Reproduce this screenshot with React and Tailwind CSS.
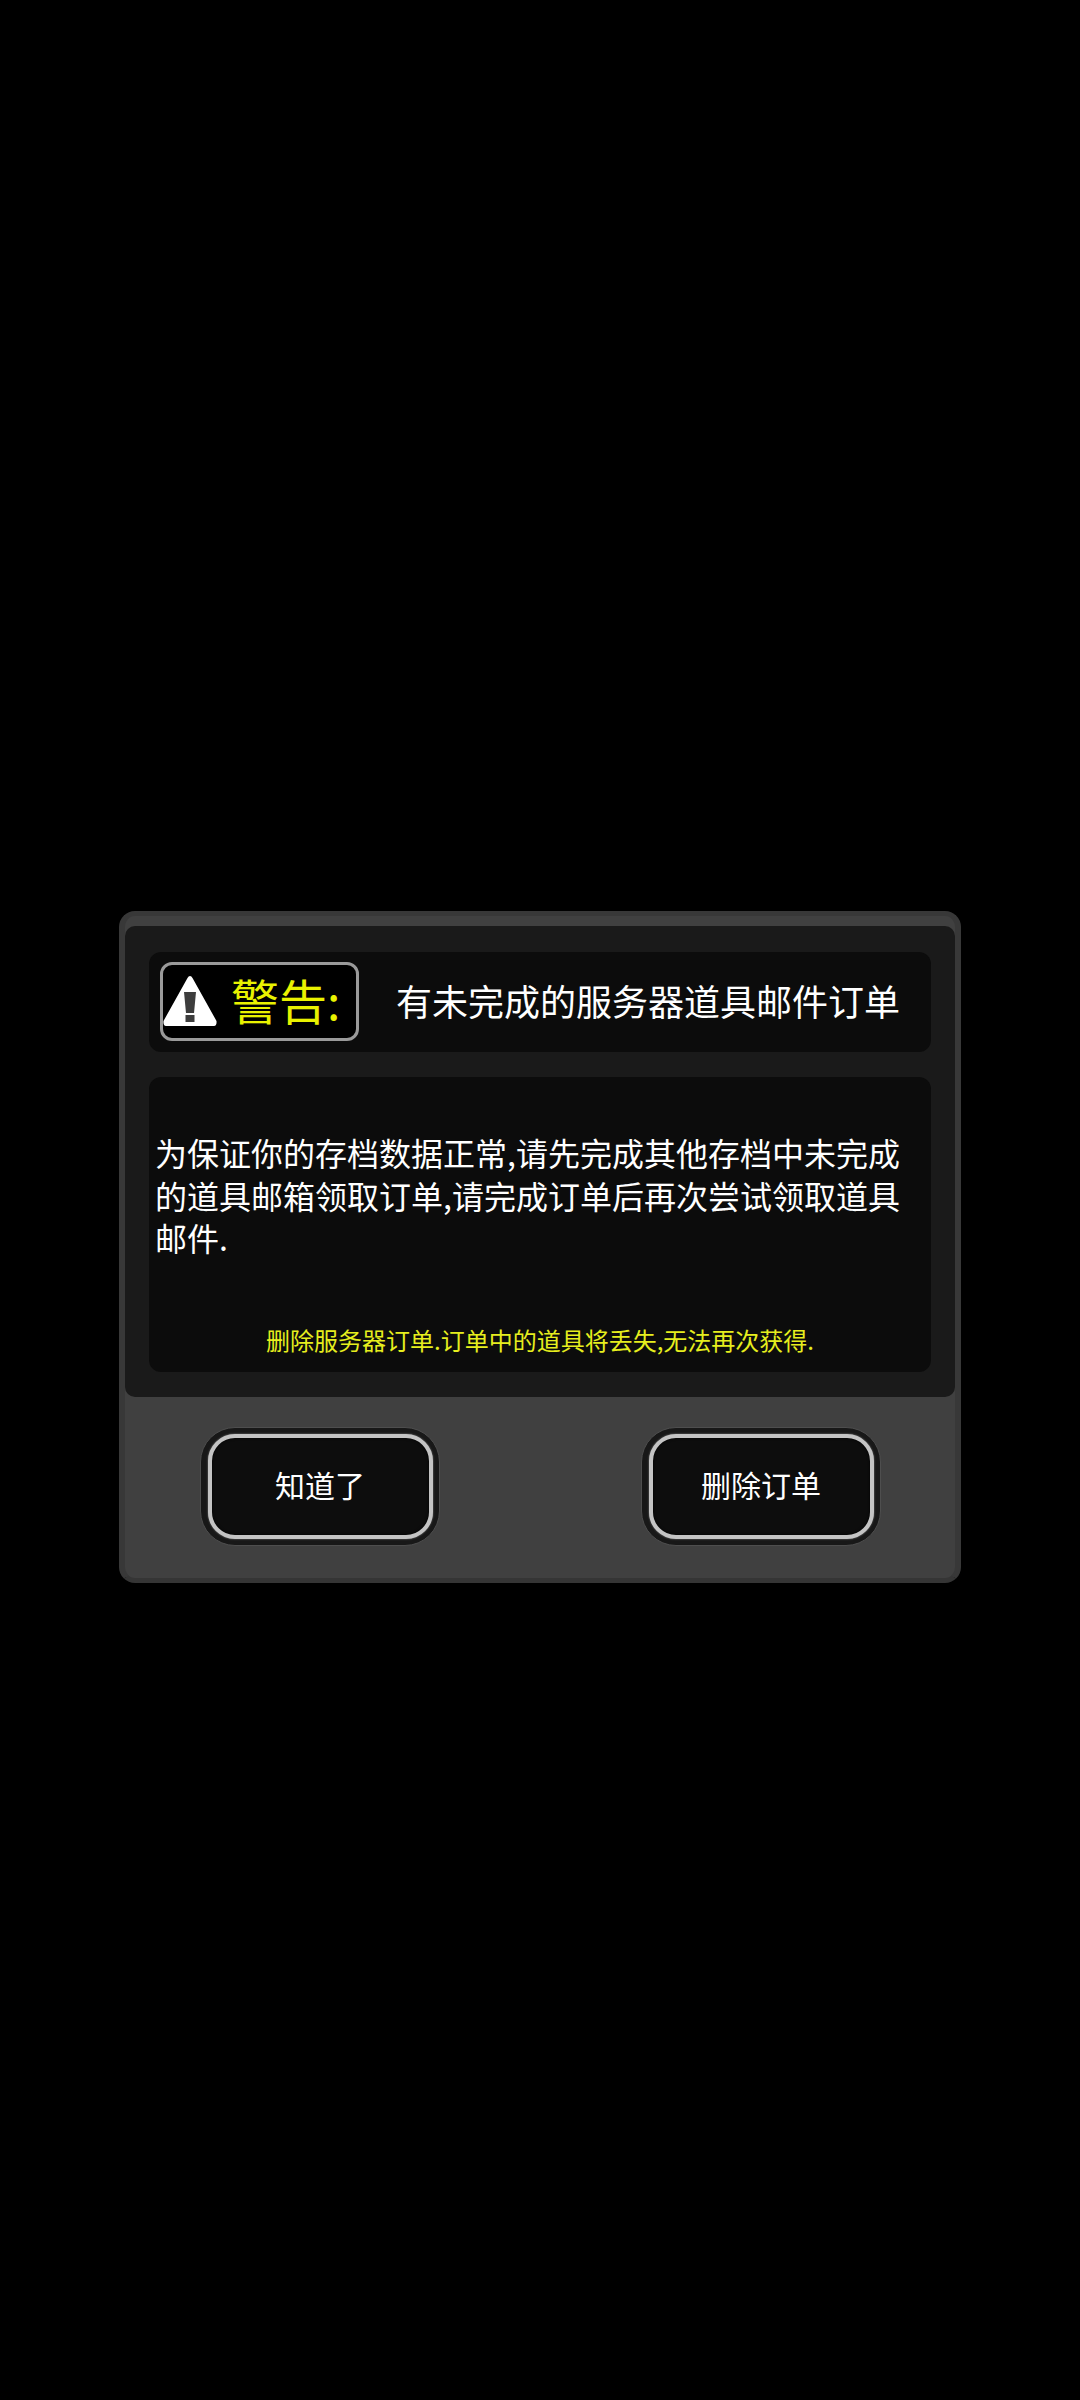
/**
 * Warning dialog shown when server item mail orders are still pending.
 */

const FONT = "font-['Noto_Sans_CJK_SC','Noto_Sans',sans-serif]";

function WarningIcon() {
  return (
    <svg width="54" height="52" viewBox="0 0 54 52" className="shrink-0">
      <path d="M27 1 Q28.500 1 29.500 3 L53.500 46 Q54 51 51 51 L3 51 Q0 51 0.500 46 L24.500 3 Q25.500 1 27 1 Z" fill="#ffffff" />
      <path d="M21 17 H33 L31 38 H23 Z" fill="#3d3d3d" />
      <rect x="22.500" y="40" width="9" height="7" fill="#3d3d3d" />
    </svg>
  );
}

function ActionButton({ label }) {
  return (
    <div className="w-[240px] h-[119px] rounded-[35px] bg-[#181818] border border-[#4e4e4e] flex items-center justify-center">
      <button className="w-[225px] h-[105px] rounded-[27px] bg-[#0d0d0d] border-[4px] border-[#c4c4c4] text-white text-[30px] leading-none pb-[4px] flex items-center justify-center shadow-[inset_0_0_3px_#000,0_0_2px_#8a8a8a]">
        {label}
      </button>
    </div>
  );
}

export default function App() {
  return (
    <div className={`h-[2400px] bg-black pt-[911px] ${FONT}`}>
      <div className="mx-auto w-[842px] h-[672px] rounded-[16px] bg-[#404040] border-x-[6px] border-b-[5px] border-t-[5px] pt-[10px] border-x-[#383838] border-b-[#353535] border-t-[#383838] flex flex-col">
        <div className="h-[471px] rounded-[10px] bg-[#1a1a1a] px-[24px] pt-[26px] flex flex-col gap-[25px]">
          <div className="h-[100px] rounded-[12px] bg-[#0c0c0c] pl-[11px] pr-[31px] flex items-center justify-between">
            <div className="w-[199px] h-[79px] -mt-[2px] rounded-[12px] bg-black border-[3px] border-[#9a9a9a] flex items-center gap-[14px]">
              <WarningIcon />
              <span className="text-[#e9f200] text-[48px] leading-none whitespace-nowrap -mt-[5px]">警告:</span>
            </div>
            <div className="text-white text-[36px] leading-none whitespace-nowrap -mt-[4px] -ml-[1px]">有未完成的服务器道具邮件订单</div>
          </div>
          <div className="h-[295px] rounded-[12px] bg-[#0c0c0c] px-[6px] pt-[54px] flex flex-col">
            <p className="text-white text-[32px] leading-[42.500px]">
              为保证你的存档数据正常,请先完成其他存档中未完成的道具邮箱领取订单,请完成订单后再次尝试领取道具邮件.
            </p>
            <p className="mt-[66px] text-center text-[#e6ee1e] text-[24px] leading-[30px]">
              删除服务器订单.订单中的道具将丢失,无法再次获得.
            </p>
          </div>
        </div>
        <div className="flex-1 pl-[75px] pr-[74px] flex items-center justify-between pb-[3px]">
          <ActionButton label="知道了" />
          <ActionButton label="删除订单" />
        </div>
      </div>
    </div>
  );
}
